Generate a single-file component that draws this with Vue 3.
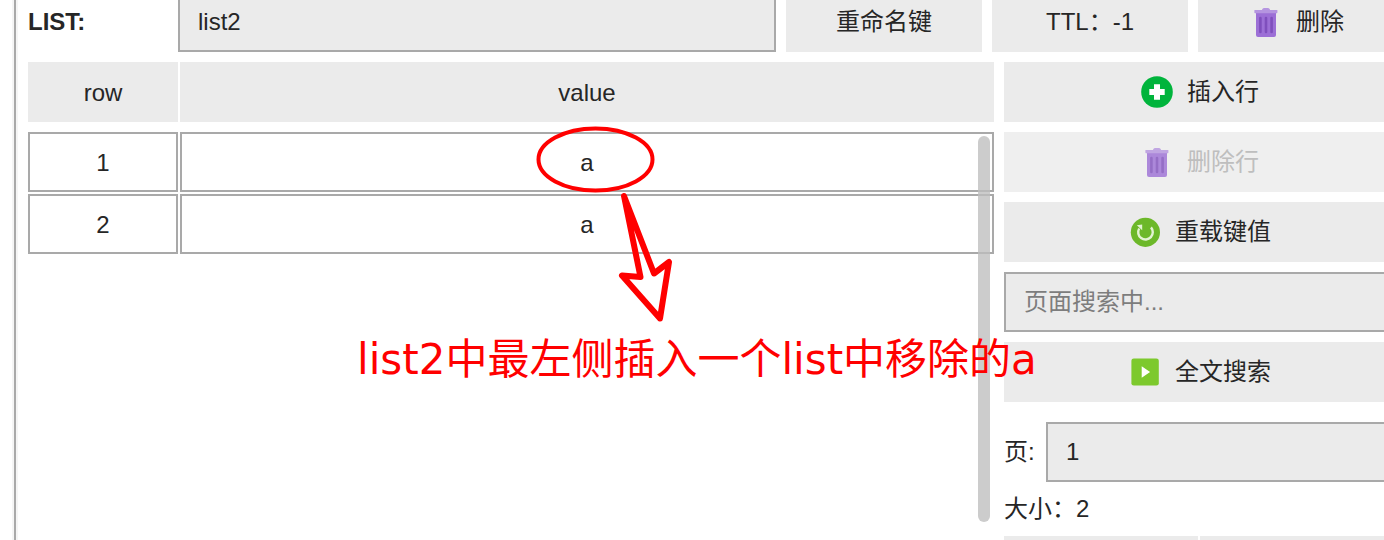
<script setup>
import { ref } from 'vue'

const keyName = ref('list2')
const search = ref('')
const page = ref('1')
const rows = ref([
  { id: 1, value: 'a' },
  { id: 2, value: 'a' },
])
</script>

<template>
  <div class="app">
    <svg class="defs" aria-hidden="true">
      <symbol id="trash" viewBox="0 0 32 32">
        <path fill="#b595e0" d="M12 4c0-1 1-2 2-2h4c1 0 2 1 2 2z" />
        <path fill="#9c6fd6" d="M6 6h20v23a2 2 0 0 1-2 2H8a2 2 0 0 1-2-2z" />
        <rect fill="#b595e0" x="4.4" y="4" width="23" height="3.2" rx="0.6" />
        <path stroke="#7f4fbd" stroke-width="2.6" stroke-linecap="round" d="M10.4 12v14M16 12v14M21.6 12v14" />
      </symbol>
    </svg>

    <div class="splitter"></div>
    <main class="panel">
      <header class="topbar">
        <label class="key-type" for="key-name">LIST:</label>
        <input id="key-name" v-model="keyName" class="field key-name" type="text" />
        <button class="btn action" type="button">重命名键</button>
        <button class="btn action" type="button">TTL：-1</button>
        <button class="btn action with-icon" type="button">
          <svg class="icon" aria-hidden="true"><use href="#trash" /></svg>删除
        </button>
      </header>

      <div class="content">
        <section class="rows">
          <table>
            <thead>
              <tr><th class="index" scope="col">row</th><th scope="col">value</th></tr>
            </thead>
            <tbody>
              <tr v-for="row in rows" :key="row.id">
                <td>{{ row.id }}</td><td>{{ row.value }}</td>
              </tr>
            </tbody>
          </table>
          <div class="thumb"></div>
        </section>

        <aside class="side">
          <button class="btn with-icon" type="button">
            <svg class="icon" viewBox="0 0 32 32" aria-hidden="true">
              <circle cx="16" cy="16" r="15.8" fill="#00b43c" />
              <path fill="#fff" d="M13 8.3h6V13h4.7v6H19v4.7h-6V19H8.3v-6H13z" />
            </svg>插入行
          </button>
          <button class="btn with-icon" type="button" disabled>
            <svg class="icon" aria-hidden="true"><use href="#trash" /></svg>删除行
          </button>
          <button class="btn with-icon" type="button">
            <svg class="icon" viewBox="0 0 32 32" aria-hidden="true">
              <circle cx="16.4" cy="16.3" r="14.6" fill="#6cb829" />
              <path fill="none" stroke="#e2f3d2" stroke-width="2.4" d="M22 11.4A7.3 7.3 0 1 1 10.2 12.5" />
              <path fill="#e2f3d2" d="M7.8 9.2l5.4-.6v5.6z" />
            </svg>重载键值
          </button>
          <input v-model="search" class="field" type="text" placeholder="页面搜索中..." aria-label="页面搜索" />
          <button class="btn with-icon" type="button">
            <svg class="icon" viewBox="0 0 32 32" aria-hidden="true">
              <rect x="2.4" y="2.4" width="27.4" height="27.2" rx="2.4" fill="#7dc92d" />
              <path fill="#fff" d="M12.7 10.2l8.4 5.8-8.4 5.8z" />
            </svg>全文搜索
          </button>
          <div class="pager">
            <label for="page">页:</label>
            <input id="page" v-model="page" class="field" type="text" />
          </div>
          <div class="size">大小：2</div>
          <div class="nav">
            <button class="btn" type="button" aria-label="上一页"></button>
            <button class="btn" type="button" aria-label="下一页"></button>
          </div>
        </aside>
      </div>
    </main>

    <svg class="marks" viewBox="0 0 130 200" aria-hidden="true">
      <g fill="none" stroke="#f00" stroke-linejoin="round">
        <ellipse cx="60.5" cy="39.5" rx="57" ry="31" stroke-width="4" />
        <path stroke-width="6" d="M89 76L119 153.500L134 142L125 198.500L87 155.500L105.500 157Z" />
      </g>
    </svg>
    <p class="note">list2中最左侧插入一个list中移除的a</p>
  </div>
</template>

<style>
body {
  background: #fff;
}
</style>

<style scoped>
.app {
  position: relative;
  display: flex;
  height: 100vh;
  overflow: hidden;
  color: #262626;
  font-family: "Liberation Sans", "Noto Sans CJK SC", sans-serif;
  font-size: 24px;
  line-height: 36px;
}
.app *,
.app *::before {
  box-sizing: border-box;
}
.defs {
  position: absolute;
  width: 0;
  height: 0;
}
.splitter {
  flex: none;
  width: 6px;
  margin-left: 12px;
  border: solid #f5f5f5;
  border-width: 0 2px;
  background: #a9a9a9;
}
.panel {
  flex: 1;
  min-width: 0;
  margin: -8px -10px 0 10px;
}
.topbar {
  display: flex;
  align-items: center;
  gap: 10px;
}
.key-type {
  flex: none;
  width: 140px;
  font-weight: bold;
}
.key-name {
  flex: 1;
}
.action {
  flex: none;
  width: 196px;
}
.btn,
.field {
  min-width: 0;
  height: 60px;
  margin: 0;
  border-radius: 0;
  background: #ebebeb;
  color: inherit;
  font: inherit;
}
.btn {
  display: flex;
  align-items: center;
  justify-content: center;
  padding: 0;
  border: 0;
}
.with-icon {
  gap: 14px;
  padding-left: 2px;
}
.btn:disabled {
  background: #efefef;
  color: #bebebe;
}
.btn:disabled .icon {
  opacity: 0.8;
}
.icon {
  flex: none;
  width: 32px;
  height: 32px;
}
.field {
  padding: 0 18px;
  border: 2px solid #a9a9a9;
  outline: none;
}
.field::placeholder {
  color: #7d7d7d;
  opacity: 1;
}
.content {
  display: flex;
  gap: 10px;
  margin-top: 10px;
}
.rows {
  position: relative;
  flex: 1;
  min-width: 0;
}
table {
  width: calc(100% + 4px);
  margin: -2px;
  border-collapse: separate;
  border-spacing: 2px;
  table-layout: fixed;
}
tbody::before {
  content: "";
  display: block;
  height: 6px;
}
th,
td {
  height: 60px;
  padding: 2px 0 0;
  text-align: center;
  font-weight: normal;
}
th {
  background: #ebebeb;
}
td {
  border: 2px solid #a9a9a9;
}
.index {
  width: 150px;
}
.thumb {
  position: absolute;
  top: 74px;
  right: 4px;
  width: 12px;
  height: 386px;
  border-radius: 6px;
  background: rgba(190, 190, 190, 0.78);
}
.side {
  display: flex;
  flex: none;
  flex-direction: column;
  gap: 10px;
  width: 390px;
}
.pager {
  display: flex;
  align-items: center;
  gap: 10px;
  margin-top: 10px;
}
.pager label {
  flex: none;
  width: 32px;
}
.pager .field {
  flex: 1;
}
.size {
  height: 34px;
  line-height: 34px;
}
.nav {
  display: grid;
  grid-template-columns: 1fr 1fr;
  gap: 2px;
}
.marks {
  position: absolute;
  top: 120px;
  left: 535px;
  width: 130px;
  height: 200px;
  overflow: visible;
}
.note {
  position: absolute;
  top: 330px;
  left: 357px;
  margin: 0;
  color: #f00;
  font-family: "DejaVu Sans", "Noto Sans CJK SC", sans-serif;
  font-size: 42px;
  line-height: 60px;
  white-space: nowrap;
}
</style>
